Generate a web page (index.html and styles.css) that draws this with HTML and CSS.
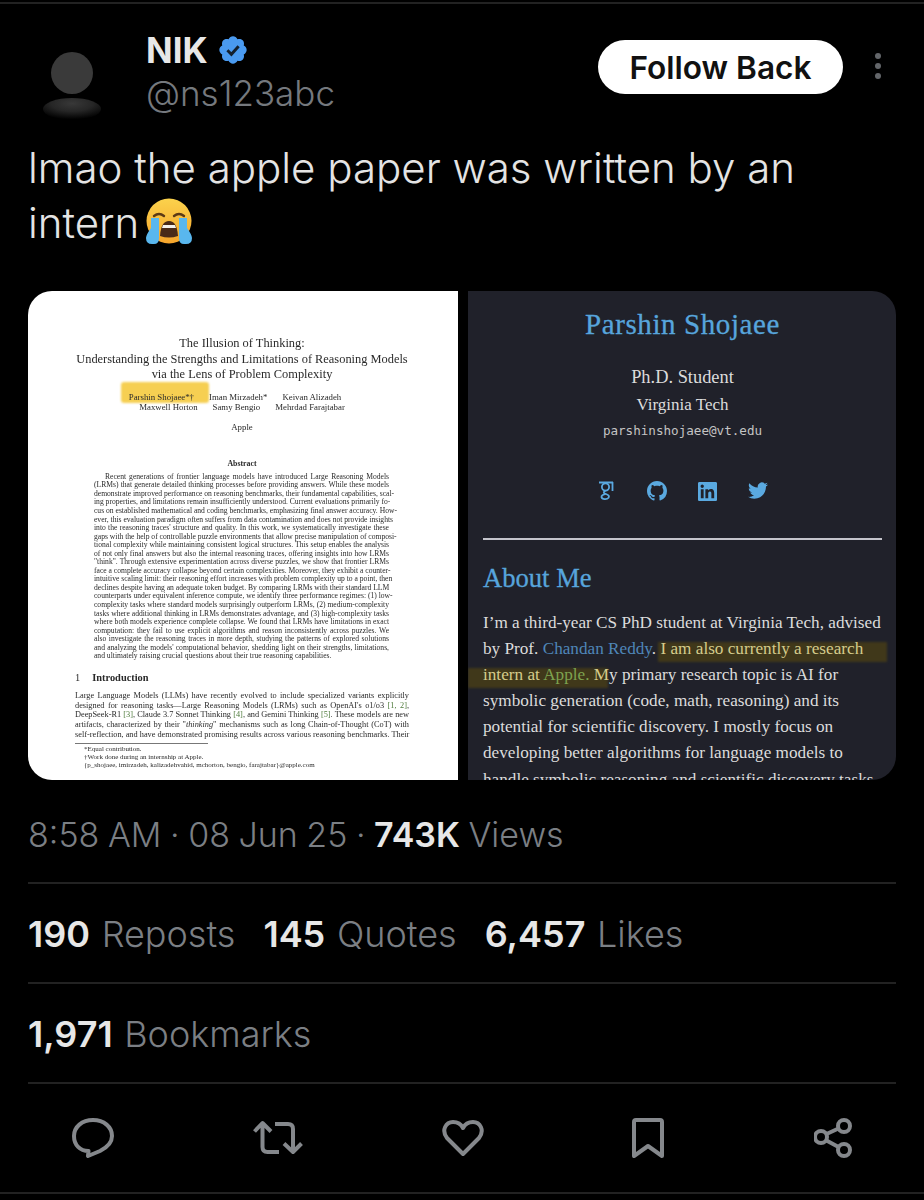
FILE: index.html
```html
<!DOCTYPE html>
<html lang="en">
<head>
    <meta charset="UTF-8">
    <meta name="viewport" content="width=device-width, initial-scale=1.0">
    <title>NIK on X</title>
    <link rel="stylesheet" href="styles.css">
</head>
<body>
    <div class="top-line"></div>

    <main class="post">
        <!-- Author -->
        <header class="author">
            <svg class="avatar" width="60" height="70" viewBox="0 0 60 70">
                <defs>
                    <radialGradient id="avatarShadow" cy="0.25" r="0.72">
                        <stop offset="0" stop-color="#383838"/>
                        <stop offset="0.5" stop-color="#262626"/>
                        <stop offset="1" stop-color="#000"/>
                    </radialGradient>
                </defs>
                <circle cx="30" cy="21" r="21" fill="#3a3a3a"/>
                <ellipse cx="30" cy="57" rx="29" ry="11" fill="url(#avatarShadow)"/>
            </svg>
            <div class="names">
                <div class="name">NIK
                    <svg class="badge" width="32" height="32" viewBox="0 0 24 24">
                        <path fill="#4a9af0" d="M22.25 12c0-1.43-.88-2.67-2.19-3.34.46-1.39.2-2.9-.81-3.91s-2.52-1.27-3.91-.81c-.66-1.31-1.91-2.19-3.34-2.19s-2.67.88-3.33 2.19c-1.4-.46-2.91-.2-3.92.81s-1.26 2.52-.8 3.91c-1.31.67-2.2 1.91-2.2 3.34s.89 2.67 2.2 3.34c-.46 1.39-.21 2.9.8 3.91s2.52 1.26 3.91.81c.67 1.31 1.91 2.19 3.34 2.19s2.68-.88 3.34-2.19c1.39.45 2.9.2 3.91-.81s1.27-2.52.81-3.91c1.31-.67 2.19-1.91 2.19-3.34z"/>
                        <path fill="none" stroke="#14202e" stroke-width="2.2" d="M7.800 12.200l3 3 5.400-6"/>
                    </svg>
                </div>
                <div class="handle">@ns123abc</div>
            </div>
            <button class="follow-btn">Follow Back</button>
            <div class="more"><span></span><span></span><span></span></div>
        </header>

        <!-- Tweet text -->
        <p class="tweet-text">lmao the apple paper was written by an<br>intern<svg class="emoji" width="50" height="47" viewBox="0 0 50 47">
                <defs>
                    <linearGradient id="face" x1="0" y1="0" x2="0" y2="1">
                        <stop offset="0" stop-color="#fbd24c"/>
                        <stop offset="1" stop-color="#f6a52c"/>
                    </linearGradient>
                </defs>
                <circle cx="25" cy="23" r="22.500" fill="url(#face)"/>
                <path d="M10 18q5-4 10 0M30 18q5-4 10 0" fill="none" stroke="#5c3a16" stroke-width="2.400" stroke-linecap="round"/>
                <path d="M16 38q1-15 9-15t9 15q-9 3-18 0z" fill="#4a2a18"/>
                <path d="M19 27h12l1 3h-14z" fill="#f4f0ea"/>
                <path d="M7 20h8v20q0 6-5 6h-2q-6 0-6-6 0-3 5-10zM35 20h8l0 10q5 7 5 10 0 6-6 6h-2q-5 0-5-6z" fill="#59b7ee"/>
            </svg></p>

        <!-- Attached screenshots -->
        <section class="media">
            <div class="paper">
                <div class="paper-mark"></div>
                <div class="paper-title">
                    <div>The Illusion of Thinking:</div>
                    <div>Understanding the Strengths and Limitations of Reasoning Models</div>
                    <div>via the Lens of Problem Complexity</div>
                </div>
                <div class="paper-authors">
                    <div class="authors-first"><span>Parshin Shojaee*†</span><span>Iman Mirzadeh*</span><span>Keivan Alizadeh</span></div>
                    <div><span>Maxwell Horton</span><span>Samy Bengio</span><span>Mehrdad Farajtabar</span></div>
                </div>
                <div class="paper-org">Apple</div>
                <div class="abstract-head">Abstract</div>
                <div class="abstract">
                    <div class="ln first">Recent generations of frontier language models have introduced Large Reasoning Models</div>
                    <div class="ln">(LRMs) that generate detailed thinking processes before providing answers. While these models</div>
                    <div class="ln">demonstrate improved performance on reasoning benchmarks, their fundamental capabilities, scal-</div>
                    <div class="ln">ing properties, and limitations remain insufficiently understood. Current evaluations primarily fo-</div>
                    <div class="ln">cus on established mathematical and coding benchmarks, emphasizing final answer accuracy. How-</div>
                    <div class="ln">ever, this evaluation paradigm often suffers from data contamination and does not provide insights</div>
                    <div class="ln">into the reasoning traces' structure and quality. In this work, we systematically investigate these</div>
                    <div class="ln">gaps with the help of controllable puzzle environments that allow precise manipulation of composi-</div>
                    <div class="ln">tional complexity while maintaining consistent logical structures. This setup enables the analysis</div>
                    <div class="ln">of not only final answers but also the internal reasoning traces, offering insights into how LRMs</div>
                    <div class="ln">"think". Through extensive experimentation across diverse puzzles, we show that frontier LRMs</div>
                    <div class="ln">face a complete accuracy collapse beyond certain complexities. Moreover, they exhibit a counter-</div>
                    <div class="ln">intuitive scaling limit: their reasoning effort increases with problem complexity up to a point, then</div>
                    <div class="ln">declines despite having an adequate token budget. By comparing LRMs with their standard LLM</div>
                    <div class="ln">counterparts under equivalent inference compute, we identify three performance regimes: (1) low-</div>
                    <div class="ln">complexity tasks where standard models surprisingly outperform LRMs, (2) medium-complexity</div>
                    <div class="ln">tasks where additional thinking in LRMs demonstrates advantage, and (3) high-complexity tasks</div>
                    <div class="ln">where both models experience complete collapse. We found that LRMs have limitations in exact</div>
                    <div class="ln">computation: they fail to use explicit algorithms and reason inconsistently across puzzles. We</div>
                    <div class="ln">also investigate the reasoning traces in more depth, studying the patterns of explored solutions</div>
                    <div class="ln">and analyzing the models' computational behavior, shedding light on their strengths, limitations,</div>
                    <div class="ln last">and ultimately raising crucial questions about their true reasoning capabilities.</div>
                </div>
                <div class="intro-head"><span>1</span><b>Introduction</b></div>
                <div class="intro">
                    <div class="ln">Large Language Models (LLMs) have recently evolved to include specialized variants explicitly</div>
                    <div class="ln">designed for reasoning tasks—Large Reasoning Models (LRMs) such as OpenAI's o1/o3 <i class="ref">[1, 2]</i>,</div>
                    <div class="ln">DeepSeek-R1 <i class="ref">[3]</i>, Claude 3.7 Sonnet Thinking <i class="ref">[4]</i>, and Gemini Thinking <i class="ref">[5]</i>. These models are new</div>
                    <div class="ln">artifacts, characterized by their "<em>thinking</em>" mechanisms such as long Chain-of-Thought (CoT) with</div>
                    <div class="ln">self-reflection, and have demonstrated promising results across various reasoning benchmarks. Their</div>
                </div>
                <div class="notes">
                    <div>*Equal contribution.</div>
                    <div>†Work done during an internship at Apple.</div>
                    <div class="mail">{p_shojaee, imirzadeh, kalizadehvahid, mchorton, bengio, farajtabar}@apple.com</div>
                </div>
            </div>

            <div class="profile">
                <div class="hl hl-one"></div>
                <div class="hl hl-two"></div>
                <h1 class="profile-name">Parshin Shojaee</h1>
                <div class="profile-role">Ph.D. Student</div>
                <div class="profile-org">Virginia Tech</div>
                <div class="profile-mail">parshinshojaee@vt.edu</div>
                <div class="socials">
                    <svg width="18" height="20" viewBox="0 0 18 20" fill="none" stroke="#5aa9e0" stroke-width="1.800">
                        <path d="M1 1.500h14M14.500 1v9"/>
                        <circle cx="7.500" cy="6" r="3.600"/>
                        <path d="M8 9.500c-3 1-3 2.500 0 3.500 3 1 3.500 2.400 2.500 3.800-1.500 2-6.500 1.700-7-.6-.3-1.500 1.500-2.700 4-3"/>
                    </svg>
                    <svg width="20" height="20" viewBox="0 0 16 16">
                        <path fill="#5aa9e0" d="M8 0C3.580 0 0 3.580 0 8c0 3.540 2.290 6.530 5.470 7.590.4.070.55-.17.55-.38 0-.19-.01-.82-.01-1.490-2.010.37-2.530-.49-2.690-.94-.09-.23-.48-.94-.82-1.130-.28-.15-.68-.52-.01-.53.63-.01 1.080.58 1.230.82.72 1.210 1.870.87 2.330.66.07-.52.28-.87.51-1.070-1.780-.2-3.640-.89-3.640-3.950 0-.87.31-1.590.82-2.150-.08-.2-.36-1.020.08-2.120 0 0 .67-.21 2.200.82.64-.18 1.320-.27 2-.27.68 0 1.360.09 2 .27 1.530-1.040 2.200-.82 2.200-.82.44 1.100.16 1.920.08 2.120.51.56.82 1.270.82 2.150 0 3.070-1.870 3.750-3.650 3.950.29.25.54.73.54 1.480 0 1.070-.01 1.930-.01 2.200 0 .21.15.46.55.38A8.013 8.013 0 0016 8c0-4.420-3.580-8-8-8z"/>
                    </svg>
                    <svg width="19" height="19" viewBox="0 0 24 24">
                        <path fill="#5aa9e0" d="M20.447 20.452h-3.554v-5.569c0-1.328-.027-3.037-1.852-3.037-1.853 0-2.136 1.445-2.136 2.939v5.667H9.351V9h3.414v1.561h.046c.477-.9 1.637-1.850 3.370-1.850 3.601 0 4.267 2.370 4.267 5.455v6.286zM5.337 7.433c-1.144 0-2.063-.926-2.063-2.065 0-1.138.92-2.063 2.063-2.063 1.140 0 2.064.925 2.064 2.063 0 1.139-.925 2.065-2.064 2.065zm1.782 13.019H3.555V9h3.564v11.452zM22.225 0H1.771C.792 0 0 .774 0 1.729v20.542C0 23.227.792 24 1.771 24h20.451C23.200 24 24 23.227 24 22.271V1.729C24 .774 23.200 0 22.222 0h.003z"/>
                    </svg>
                    <svg width="20" height="18" viewBox="0 0 24 21">
                        <path fill="#5aa9e0" transform="translate(0 -2)" d="M23.953 4.570a10 10 0 01-2.825.775 4.958 4.958 0 002.163-2.723c-.951.555-2.005.959-3.127 1.184a4.920 4.920 0 00-8.384 4.482C7.690 8.095 4.067 6.130 1.640 3.162a4.822 4.822 0 00-.666 2.475c0 1.710.870 3.213 2.188 4.096a4.904 4.904 0 01-2.228-.616v.060a4.923 4.923 0 003.946 4.827 4.996 4.996 0 01-2.212.085 4.936 4.936 0 004.604 3.417 9.867 9.867 0 01-6.102 2.105c-.39 0-.779-.023-1.170-.067a13.995 13.995 0 007.557 2.209c9.053 0 13.998-7.496 13.998-13.985 0-.21 0-.42-.015-.63A9.935 9.935 0 0024 4.590z"/>
                    </svg>
                </div>
                <div class="profile-rule"></div>
                <h2 class="about-head">About Me</h2>
                <p class="about-text">I’m a third-year CS PhD student at Virginia Tech, advised<br>by Prof. <span class="link">Chandan Reddy</span>. <span class="marked">I am also currently a research<br>intern at <span class="link-green">Apple.</span> M</span>y primary research topic is AI for<br>symbolic generation (code, math, reasoning) and its<br>potential for scientific discovery. I mostly focus on<br>developing better algorithms for language models to<br>handle symbolic reasoning and scientific discovery tasks</p>
            </div>
        </section>

        <!-- Time and counts -->
        <div class="row meta">8:58 AM · 08 Jun 25 · <b>743K</b> Views</div>
        <div class="row stats">
            <span><b>190</b> Reposts</span>
            <span><b>145</b> Quotes</span>
            <span><b>6,457</b> Likes</span>
        </div>
        <div class="row stats"><span><b>1,971</b> Bookmarks</span></div>
    </main>

    <!-- Action icons -->
    <nav class="actions">
        <svg width="42" height="40" viewBox="0 0 42 40"><path d="M21 2C32 2 40 9 40 18C40 26 34 30 28 33L16 38L16.500 33C8 33 2 27 2 18C2 9 10 2 21 2Z"/></svg>
        <svg width="50" height="36" viewBox="0 0 50 36"><path d="M1.500 11.500L9.500 3L18 11.500M9.500 3V27Q9.500 32 14.500 32H26M22 4H35Q40 4 40 9V32M31 23.500L40 32L48.500 23.500"/></svg>
        <svg width="42" height="38" viewBox="0 0 42 38"><path d="M21 35L5 19C-1 11 4 3 11 3C16 3 19 5 21 9C23 5 26 3 31 3C38 3 43 11 37 19Z"/></svg>
        <svg width="32" height="41" viewBox="0 0 32 41"><path d="M2 38V4Q2 2 4 2H28Q30 2 30 4V38L16 28Z"/></svg>
        <svg width="38" height="40" viewBox="0 0 38 40"><circle cx="30" cy="8" r="6"/><circle cx="7" cy="19" r="6"/><circle cx="30" cy="32" r="6"/><path d="M12.500 16L24.500 10.500M12.500 22.500L24.500 29"/></svg>
    </nav>
    <div class="bottom-line"></div>
</body>
</html>
```

FILE: styles.css
```css
body {
    margin: 0;
    background-color: #000;
    color: #e7e7e7;
    font-family: Inter, "Liberation Sans", sans-serif;
    overflow: hidden;
}

.top-line {
    height: 2px;
    margin-top: 2px;
    background-color: #222;
}

.post {
    padding: 0 28px;
}

/* author row */
.author {
    display: flex;
    align-items: flex-start;
    height: 84px;
    padding-top: 26px;
}

.avatar {
    margin: 22px 0 0 14px;
    flex-shrink: 0;
}

.names {
    margin-left: 44px;
    flex: 1;
}

.name {
    display: flex;
    align-items: center;
    gap: 9px;
    font-size: 35px;
    font-weight: 700;
    line-height: 40px;
}

.handle {
    font-size: 35px;
    font-weight: 300;
    line-height: 46px;
    color: #75797e;
}

.follow-btn {
    width: 245px;
    height: 54px;
    margin-top: 10px;
    border: none;
    border-radius: 27px;
    background-color: #fff;
    color: #111;
    font-family: inherit;
    font-size: 31.6px;
    font-weight: 600;
    cursor: pointer;
}

.more {
    display: flex;
    flex-direction: column;
    gap: 4px;
    width: 38px;
    padding-right: 15px;
    margin-top: 23px;
    align-items: flex-end;
}

.more span {
    width: 6px;
    height: 6px;
    border-radius: 50%;
    background-color: #63666a;
}

.tweet-text {
    margin: 26px 0 0;
    font-size: 42px;
    line-height: 55px;
    font-weight: 300;
    color: #e4e4e4;
}

.emoji {
    vertical-align: -7px;
    margin-left: 5px;
}

/* two screenshots side by side */
.media {
    display: grid;
    grid-template-columns: 430px 429px;
    gap: 10px;
    height: 489px;
    margin-top: 41px;
    border-radius: 24px;
    overflow: hidden;
}

.paper {
    position: relative;
    background-color: #fff;
    color: #2a2a2a;
    font-family: "Liberation Serif", serif;
    padding: 45px 49px 0 47px;
    overflow: hidden;
    filter: blur(0.45px);
}

.paper-mark {
    position: absolute;
    left: 93px;
    top: 91px;
    width: 88px;
    height: 21px;
    border-radius: 3px;
    background-color: #f6cf52;
    filter: blur(1px);
}

.paper-title {
    position: relative;
    text-align: center;
    font-size: 12.4px;
    line-height: 15.6px;
    white-space: nowrap;
    margin-bottom: 9px;
}

.paper-authors {
    position: relative;
    font-size: 8.8px;
    line-height: 10px;
}

.paper-authors div {
    display: flex;
    justify-content: center;
    gap: 15px;
}

.paper-authors .authors-first {
    padding-right: 14px;
}

.paper-org {
    font-size: 8.8px;
    text-align: center;
    margin-top: 10px;
    line-height: 10px;
}

.abstract-head {
    font-size: 7.8px;
    font-weight: 700;
    text-align: center;
    margin-top: 27px;
    line-height: 10px;
}

.abstract {
    margin: 4px 20px 0 19px;
    font-size: 7.6px;
    line-height: 8.55px;
}

.ln {
    white-space: nowrap;
    text-align: justify;
    text-align-last: justify;
}

.ln.first {
    text-indent: 11px;
}

.ln.last {
    text-align-last: left;
}

.intro-head {
    margin-top: 11px;
    font-size: 10.4px;
    line-height: 12px;
    display: flex;
    gap: 12px;
}

.intro {
    margin-top: 7px;
    font-size: 8.3px;
    line-height: 9.7px;
}

.ref {
    font-style: normal;
    color: #4d7a3a;
}

.notes {
    margin-top: 4px;
    padding-top: 2px;
    font-size: 7px;
    line-height: 8px;
    padding-left: 9px;
    background: linear-gradient(#777, #777) no-repeat 0 0 / 133px 1px;
}

/* right screenshot */
.profile {
    position: relative;
    background-color: #20212a;
    color: #dcdcdc;
    font-family: "Liberation Serif", serif;
    padding: 0 15px;
    overflow: hidden;
    text-align: center;
}

.hl {
    position: absolute;
    height: 20px;
    background-color: #40381a;
    filter: blur(1px);
}

.hl-one {
    left: 190px;
    top: 351px;
    width: 229px;
}

.hl-two {
    left: 0;
    top: 377px;
    width: 140px;
}

.profile-name {
    position: relative;
    margin: 17px 0 0;
    font-size: 29px;
    line-height: 32px;
    font-weight: 400;
    letter-spacing: 0.6px;
    -webkit-text-stroke: 0.3px #57a5dc;
    color: #57a5dc;
}

.profile-role {
    margin-top: 24px;
    font-size: 18.4px;
    line-height: 27px;
}

.profile-org {
    font-size: 17px;
    line-height: 27px;
}

.profile-mail {
    font-family: "DejaVu Sans Mono", monospace;
    font-size: 12.6px;
    line-height: 26px;
    color: #c4c4c4;
}

.socials {
    display: flex;
    justify-content: center;
    align-items: center;
    gap: 31px;
    margin-top: 37px;
    height: 20px;
}

.profile-rule {
    height: 2px;
    margin-top: 37px;
    background-color: #c4c4cc;
}

.about-head {
    position: relative;
    margin: 22px 0 0;
    font-size: 26.6px;
    line-height: 32px;
    font-weight: 400;
    text-align: left;
    -webkit-text-stroke: 0.3px #57a5dc;
    color: #57a5dc;
}

.about-text {
    position: relative;
    margin: 16px 0 0;
    font-size: 17.2px;
    line-height: 26.1px;
    text-align: left;
    white-space: nowrap;
}

.link {
    color: #4f86b8;
}

.marked {
    color: #d5cc8c;
}

.link-green {
    color: #7da34f;
}

/* time and counts */
.row {
    font-size: 36px;
    font-weight: 300;
    color: #7b7f84;
    border-bottom: 2px solid #222;
    box-sizing: border-box;
    height: 100px;
    line-height: 101px;
    word-spacing: 1.5px;
}

.row b {
    font-weight: 600;
    color: #e7e7e7;
}

.meta {
    height: 104px;
    line-height: 110px;
    font-size: 34px;
    word-spacing: -1px;
}

.stats {
    display: flex;
    gap: 28px;
}

/* action icons */
.actions {
    display: grid;
    grid-template-columns: repeat(5, 185px);
    justify-items: center;
    align-items: center;
    height: 108px;
}

.actions svg {
    fill: none;
    stroke: #85888c;
    stroke-width: 4;
    stroke-linejoin: round;
}

.bottom-line {
    height: 2px;
    background-color: #222;
}
```
